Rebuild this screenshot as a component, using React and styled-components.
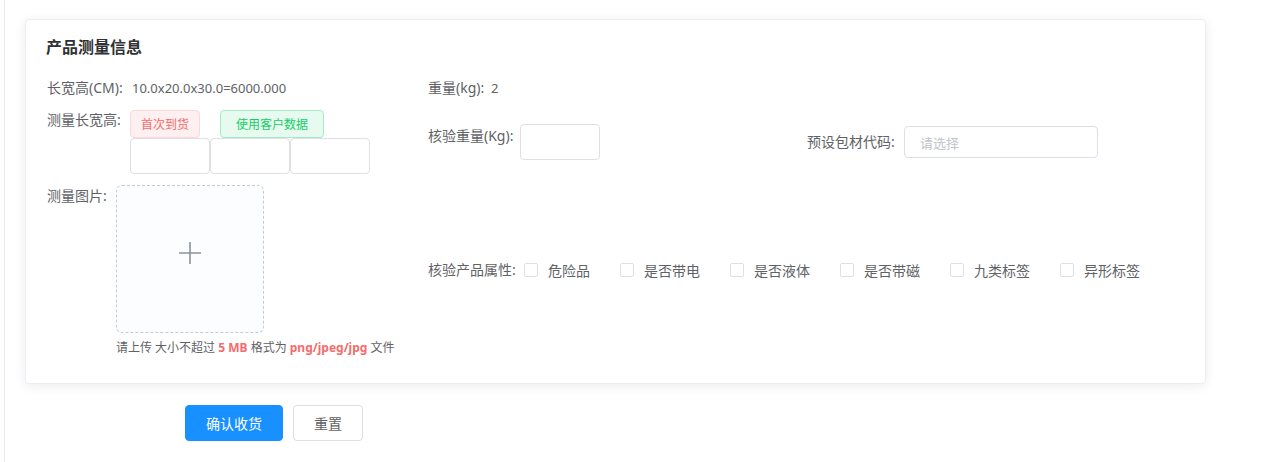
import React from "react";
import styled, { createGlobalStyle } from "styled-components";

const GlobalStyle = createGlobalStyle`
  html, body { margin: 0; padding: 0; background: #fff; }
  body {
    font-family: "Noto Sans", "Noto Sans CJK SC", sans-serif;
    color: #606266;
    -webkit-font-smoothing: antialiased;
  }
  * { box-sizing: border-box; }
`;

const Page = styled.div`
  margin-left: 4px;
  border-left: 1px solid #e6ebf5;
  min-height: 462px;
  padding: 19px 0 20px 20px;
`;

const Card = styled.section`
  width: 1181px;
  background: #fff;
  border: 1px solid #ebeef5;
  border-radius: 4px;
  box-shadow: 0 2px 12px 0 rgba(0, 0, 0, 0.08);
  padding: 14px 20px 25px 20px;
`;

const Title = styled.h3`
  margin: 0 0 20px 0;
  font-size: 16px;
  line-height: 24px;
  font-weight: 700;
  color: #303133;
  font-family: "Noto Sans CJK SC", sans-serif;
`;

const Row = styled.div`
  display: flex;
  align-items: ${(p) => p.$align || "center"};
  margin-bottom: ${(p) => p.$mb || 0}px;
`;

const Col = styled.div`
  display: flex;
  align-items: ${(p) => p.$align || "flex-start"};
  width: ${(p) => (p.$w ? `${p.$w}px` : "auto")};
  flex: ${(p) => (p.$w ? "none" : "1")};
  margin-bottom: ${(p) => p.$lift || 0}px;
`;

const Label = styled.span`
  flex: none;
  width: ${(p) => p.$w}px;
  padding-left: 1px;
  font-size: 14px;
  line-height: ${(p) => p.$lh || 20}px;
  color: #606266;
  white-space: nowrap;
`;

const Value = styled.span`
  font-size: ${(p) => p.$fs || 14}px;
  line-height: 20px;
  color: #606266;
  white-space: nowrap;
`;

const Stack = styled.div`
  display: flex;
  flex-direction: column;
`;

const ActionRow = styled.div`
  display: flex;
  gap: 20px;
`;

const Chip = styled.span`
  display: inline-flex;
  align-items: center;
  height: 28px;
  padding: 0 ${(p) => p.$pad}px;
  font-size: 12px;
  border-radius: 4px;
  border: 1px solid ${(p) => (p.$tone === "red" ? "#fdd8d8" : "#a6ebc4")};
  background: ${(p) => (p.$tone === "red" ? "#fef0f0" : "#e7faf0")};
  color: ${(p) => (p.$tone === "red" ? "#f56c6c" : "#13ce66")};
  white-space: nowrap;
`;

const InputGroup = styled.div`
  display: flex;
`;

const Box = styled.div`
  width: ${(p) => p.$w}px;
  height: ${(p) => p.$h}px;
  border: 1px solid #dcdfe6;
  border-radius: 4px;
  background: #fff;
  display: flex;
  align-items: center;
  padding-left: 15px;
  font-size: 13px;
  color: #c0c4cc;
`;

const Upload = styled.div`
  width: 148px;
  height: 148px;
  border: 1px dashed #c0ccda;
  border-radius: 6px;
  background: #fbfdff;
  display: flex;
  align-items: center;
  justify-content: center;
  padding-bottom: 12px;
`;

const Hint = styled.div`
  margin-top: 5px;
  font-size: 12px;
  line-height: 20px;
  color: #606266;
  white-space: nowrap;
`;

const Em = styled.b`
  color: #f56c6c;
  font-weight: 700;
`;

const CheckItem = styled.label`
  display: inline-flex;
  align-items: center;
  margin-right: 30px;
  font-size: 14px;
  color: #606266;
  white-space: nowrap;
`;

const CheckBox = styled.span`
  width: 14px;
  height: 14px;
  border: 1px solid #dcdfe6;
  border-radius: 2px;
  background: #fff;
  margin-right: 10px;
`;

const ButtonRow = styled.div`
  display: flex;
  gap: 10px;
  margin: 21px 0 0 160px;
`;

const Button = styled.button`
  height: 36px;
  padding: 0 20px;
  border-radius: 4px;
  font-size: 14px;
  font-family: "Noto Sans CJK SC", sans-serif;
  cursor: pointer;
  border: 1px solid ${(p) => (p.$primary ? "#1890ff" : "#dcdfe6")};
  background: ${(p) => (p.$primary ? "#1890ff" : "#fff")};
  color: ${(p) => (p.$primary ? "#fff" : "#606266")};
`;

const PlusIcon = () => (
  <svg width="24" height="24" viewBox="0 0 24 24">
    <path d="M12 1v22M1 12h22" stroke="#8c939d" strokeWidth="1.6" fill="none" />
  </svg>
);

const attrs = ["危险品", "是否带电", "是否液体", "是否带磁", "九类标签", "异形标签"];

export default function App() {
  return (
    <>
      <GlobalStyle />
      <Page>
        <Card>
          <Title>产品测量信息</Title>

          <Row $mb={12}>
            <Col $w={381} $align="center">
              <Label $w={86}>长宽高(CM):</Label>
              <Value $fs={13}>10.0x20.0x30.0=6000.000</Value>
            </Col>
            <Col $w={379} $align="center">
              <Label $w={64}>重量(kg):</Label>
              <Value $fs={13}>2</Value>
            </Col>
          </Row>

          <Row $mb={11}>
            <Col $w={381}>
              <Label $w={84}>测量长宽高:</Label>
              <Stack>
                <ActionRow>
                  <Chip $tone="red" $pad={10}>首次到货</Chip>
                  <Chip $tone="green" $pad={15}>使用客户数据</Chip>
                </ActionRow>
                <InputGroup>
                  <Box $w={80} $h={36} />
                  <Box $w={80} $h={36} />
                  <Box $w={80} $h={36} />
                </InputGroup>
              </Stack>
            </Col>
            <Col $w={379}>
              <Label $w={93} $lh={24}>核验重量(Kg):</Label>
              <Box $w={80} $h={36} />
            </Col>
            <Col>
              <Label $w={98} $lh={32}>预设包材代码:</Label>
              <Box $w={194} $h={32}>请选择</Box>
            </Col>
          </Row>

          <Row>
            <Col $w={381}>
              <Label $w={70} $lh={22}>测量图片:</Label>
              <Stack>
                <Upload>
                  <PlusIcon />
                </Upload>
                <Hint>
                  请上传 大小不超过 <Em>5 MB</Em> 格式为 <Em>png/jpeg/jpg</Em> 文件
                </Hint>
              </Stack>
            </Col>
            <Col $align="center" $lift={3}>
              <Label $w={97}>核验产品属性:</Label>
              {attrs.map((a) => (
                <CheckItem key={a}>
                  <CheckBox />
                  {a}
                </CheckItem>
              ))}
            </Col>
          </Row>
        </Card>

        <ButtonRow>
          <Button $primary>确认收货</Button>
          <Button>重置</Button>
        </ButtonRow>
      </Page>
    </>
  );
}
